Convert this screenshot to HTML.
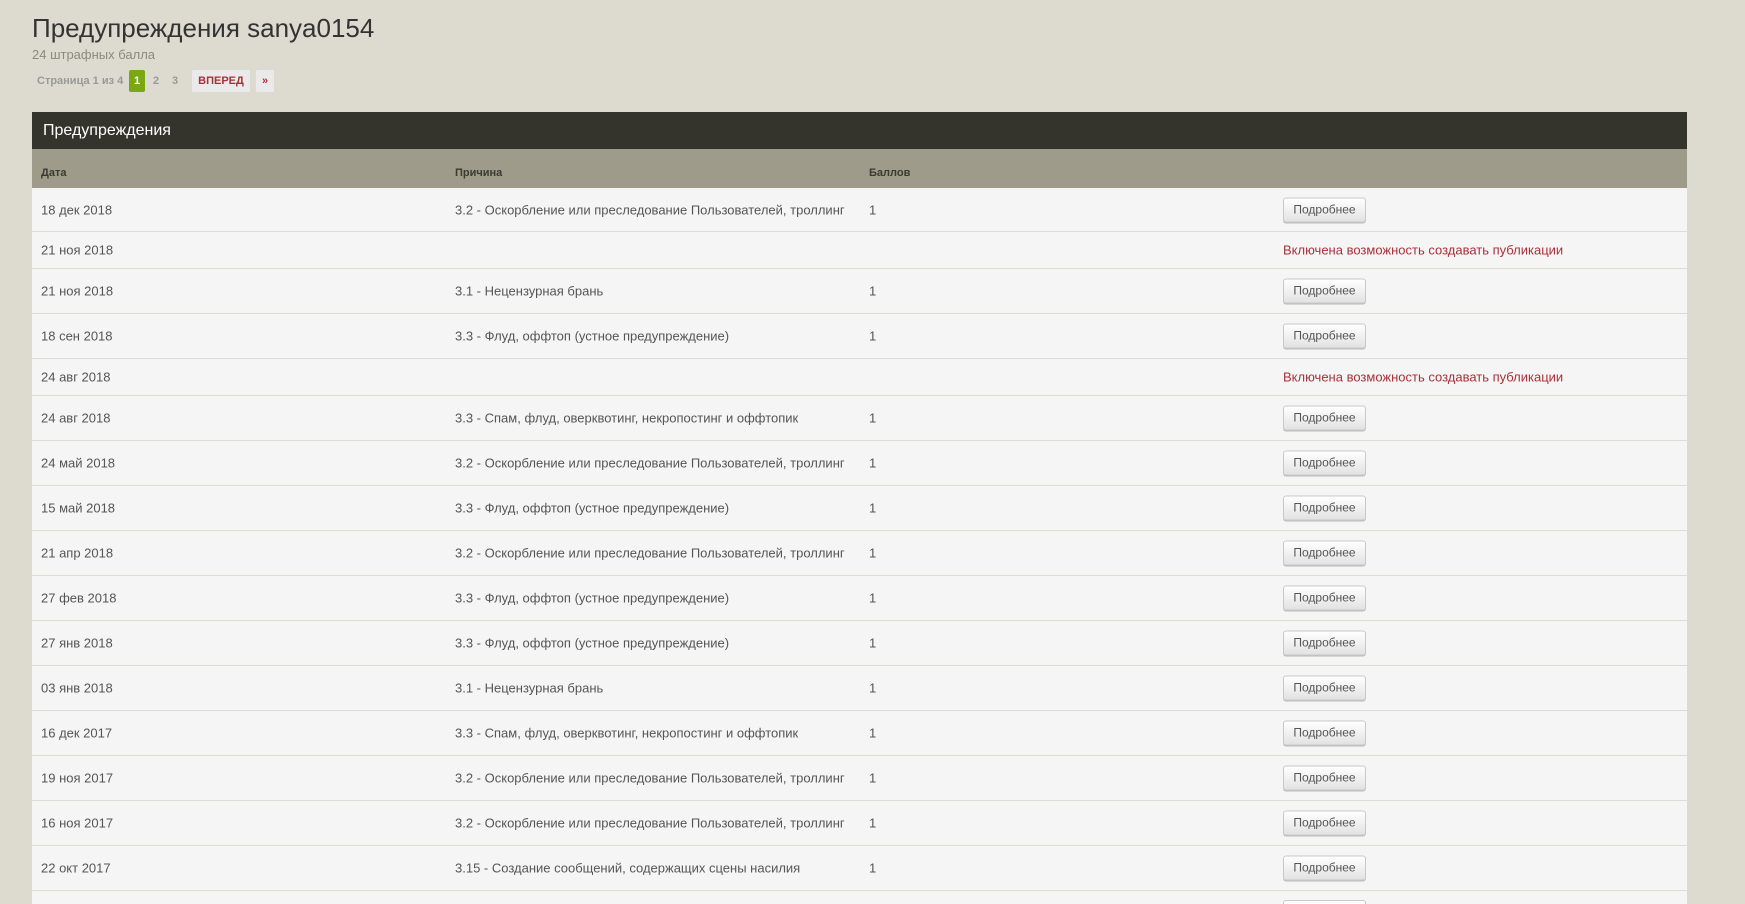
<!DOCTYPE html>
<html style="height:904px;overflow:hidden"><head><meta charset="utf-8"><style>
*{margin:0;padding:0;box-sizing:border-box}
body{width:1745px;height:904px;overflow:hidden;background:#dddbcf;font-family:"Liberation Sans",Arial,sans-serif;color:#555;position:relative}
.abs{position:absolute}
h1{position:absolute;left:32px;top:13px;font-size:26px;font-weight:normal;color:#333}
.sub{left:32px;top:47px;font-size:13px;color:#8a8a80}
.pn{top:70px;height:22px;line-height:22px;font-size:11px;font-weight:bold;color:#999}
.panel{left:32px;top:112px;width:1655px;height:792px;background:#f5f5f5;overflow:hidden}
.hd{height:37px;background:#34342c;color:#fff;font-size:16px;line-height:37px;padding-left:11px}
.ch{height:39px;background:#9e9b8a;position:relative;font-size:11px;font-weight:bold;color:#3a3a32}
.ch span{position:absolute;top:18px}
.row{position:relative;border-bottom:1px solid #dcdcd6;font-size:13px}
.row span{position:absolute;top:50%;transform:translateY(-50%);white-space:nowrap}
.c1{left:9px}.c2{left:423px}.c3{left:837px}.c4{left:1251px}
.btn{display:inline-block;width:83px;height:25px;line-height:23px;text-align:center;border:1px solid #c8c8c8;border-radius:3px;background:linear-gradient(#fff,#e2e2e2);color:#555;font-size:12px;box-shadow:0 1px 0 #bbb;font-style:normal}
.red{color:#a8303a}
</style></head><body>
<h1>Предупреждения sanya0154</h1>
<div class="abs sub">24 штрафных балла</div>
<div class="abs pn" style="left:37px">Страница 1 из 4</div>
<div class="abs pn" style="left:129px;width:16px;background:#7aa812;color:#fff;text-align:center;border-radius:2px">1</div>
<div class="abs pn" style="left:153px">2</div>
<div class="abs pn" style="left:172px">3</div>
<div class="abs pn" style="left:192px;width:58px;background:#eaeaea;color:#a8303a;text-align:center;border-radius:2px">ВПЕРЕД</div>
<div class="abs pn" style="left:256px;width:18px;background:#eaeaea;color:#a8303a;text-align:center;border-radius:2px">»</div>
<div class="abs panel">
<div class="hd">Предупреждения</div>
<div class="ch"><span style="left:9px">Дата</span><span style="left:423px">Причина</span><span style="left:837px">Баллов</span></div>
<div class="row" style="height:44px"><span class="c1">18 дек 2018</span><span class="c2">3.2 - Оскорбление или преследование Пользователей, троллинг</span><span class="c3">1</span><span class="c4"><i class="btn">Подробнее</i></span></div>
<div class="row" style="height:37px"><span class="c1">21 ноя 2018</span><span class="c4 red">Включена возможность создавать публикации</span></div>
<div class="row" style="height:45px"><span class="c1">21 ноя 2018</span><span class="c2">3.1 - Нецензурная брань</span><span class="c3">1</span><span class="c4"><i class="btn">Подробнее</i></span></div>
<div class="row" style="height:45px"><span class="c1">18 сен 2018</span><span class="c2">3.3 - Флуд, оффтоп (устное предупреждение)</span><span class="c3">1</span><span class="c4"><i class="btn">Подробнее</i></span></div>
<div class="row" style="height:37px"><span class="c1">24 авг 2018</span><span class="c4 red">Включена возможность создавать публикации</span></div>
<div class="row" style="height:45px"><span class="c1">24 авг 2018</span><span class="c2">3.3 - Спам, флуд, оверквотинг, некропостинг и оффтопик</span><span class="c3">1</span><span class="c4"><i class="btn">Подробнее</i></span></div>
<div class="row" style="height:45px"><span class="c1">24 май 2018</span><span class="c2">3.2 - Оскорбление или преследование Пользователей, троллинг</span><span class="c3">1</span><span class="c4"><i class="btn">Подробнее</i></span></div>
<div class="row" style="height:45px"><span class="c1">15 май 2018</span><span class="c2">3.3 - Флуд, оффтоп (устное предупреждение)</span><span class="c3">1</span><span class="c4"><i class="btn">Подробнее</i></span></div>
<div class="row" style="height:45px"><span class="c1">21 апр 2018</span><span class="c2">3.2 - Оскорбление или преследование Пользователей, троллинг</span><span class="c3">1</span><span class="c4"><i class="btn">Подробнее</i></span></div>
<div class="row" style="height:45px"><span class="c1">27 фев 2018</span><span class="c2">3.3 - Флуд, оффтоп (устное предупреждение)</span><span class="c3">1</span><span class="c4"><i class="btn">Подробнее</i></span></div>
<div class="row" style="height:45px"><span class="c1">27 янв 2018</span><span class="c2">3.3 - Флуд, оффтоп (устное предупреждение)</span><span class="c3">1</span><span class="c4"><i class="btn">Подробнее</i></span></div>
<div class="row" style="height:45px"><span class="c1">03 янв 2018</span><span class="c2">3.1 - Нецензурная брань</span><span class="c3">1</span><span class="c4"><i class="btn">Подробнее</i></span></div>
<div class="row" style="height:45px"><span class="c1">16 дек 2017</span><span class="c2">3.3 - Спам, флуд, оверквотинг, некропостинг и оффтопик</span><span class="c3">1</span><span class="c4"><i class="btn">Подробнее</i></span></div>
<div class="row" style="height:45px"><span class="c1">19 ноя 2017</span><span class="c2">3.2 - Оскорбление или преследование Пользователей, троллинг</span><span class="c3">1</span><span class="c4"><i class="btn">Подробнее</i></span></div>
<div class="row" style="height:45px"><span class="c1">16 ноя 2017</span><span class="c2">3.2 - Оскорбление или преследование Пользователей, троллинг</span><span class="c3">1</span><span class="c4"><i class="btn">Подробнее</i></span></div>
<div class="row" style="height:45px"><span class="c1">22 окт 2017</span><span class="c2">3.15 - Создание сообщений, содержащих сцены насилия</span><span class="c3">1</span><span class="c4"><i class="btn">Подробнее</i></span></div>
<div class="row" style="height:45px;border:0"><span class="c4" style="top:9px;transform:none"><i class="btn">Подробнее</i></span></div>
</div>
</body></html>
